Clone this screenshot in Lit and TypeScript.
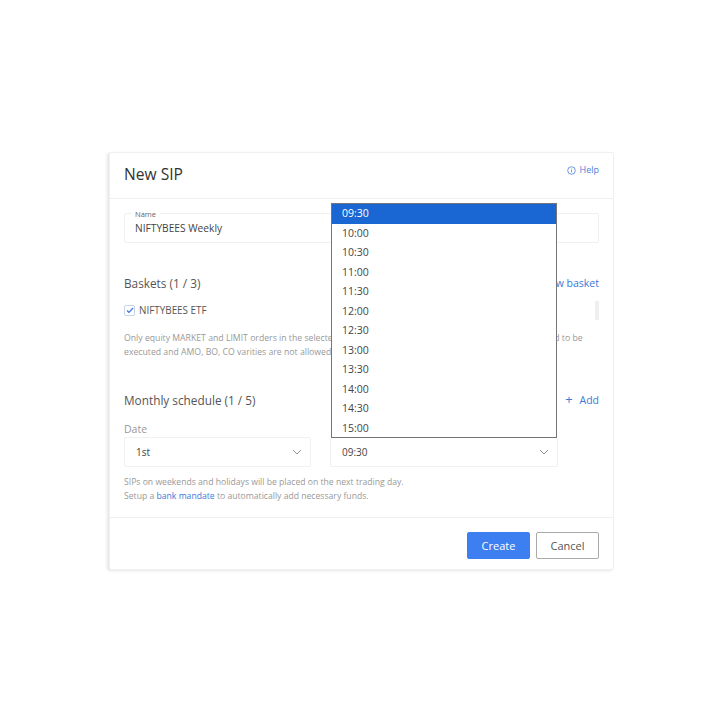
import { LitElement, html, css } from 'lit';
import { customElement } from 'lit/decorators.js';

const TIMES = ['09:30', '10:00', '10:30', '11:00', '11:30', '12:00', '12:30', '13:00', '13:30', '14:00', '14:30', '15:00'];

const chevron = html`<svg class="chevron" width="10" height="6" viewBox="0 0 10 6"><path d="M1 1l4 4 4-4" fill="none" stroke="#888" stroke-width="0.9"/></svg>`;

@customElement('app-root')
export class AppRoot extends LitElement {
  static styles = css`
    :host {
      display: block;
      height: 720px;
      background: #fff;
      font-family: 'Open Sans', 'Noto Sans', sans-serif;
      color: #444;
      box-sizing: border-box;
      padding: 152px 0 0 109px;
      overflow: hidden;
    }
    * { box-sizing: border-box; }
    .card {
      position: relative;
      width: 505px;
      height: 418px;
      background: #fff;
      border: 1px solid #f0f0f0;
      border-radius: 2px;
      box-shadow: -2px 1px 3px rgba(0, 0, 0, 0.1);
      display: flex;
      flex-direction: column;
    }
    .head {
      height: 46px;
      border-bottom: 1px solid #efefef;
      display: flex;
      justify-content: space-between;
      align-items: flex-start;
      padding: 9px 14px 0 14px;
      flex: none;
    }
    h1 {
      margin: 0;
      font-size: 15.6px;
      line-height: 24px;
      font-weight: 500;
      color: #333;
    }
    .help {
      font-size: 9px;
      line-height: 16px;
      color: #4a7fd4;
      display: flex;
      align-items: center;
      gap: 4px;
    }
    .body {
      flex: 1;
      padding: 14px 14px 0 14px;
    }
    .name {
      position: relative;
      height: 30px;
      border: 1px solid #efefef;
      border-radius: 2px;
      padding: 6px 10px 0;
      font-size: 10.2px;
      line-height: 16px;
      color: #444;
    }
    .name label {
      position: absolute;
      top: -5px;
      left: 6px;
      background: #fff;
      padding: 0 4px;
      font-size: 7.5px;
      line-height: 10px;
      color: #666;
    }
    .title-row {
      display: flex;
      justify-content: space-between;
      align-items: center;
      height: 20px;
    }
    .baskets { margin-top: 30px; }
    .schedule { margin-top: 31px; }
    h2 {
      margin: 0;
      font-size: 11.8px;
      font-weight: 400;
      color: #555;
      line-height: 20px;
    }
    .schedule .link { margin-bottom: 2px; }
    .link {
      color: #3b78d8;
      font-size: 10.5px;
      line-height: 16px;
    }
    .plus {
      font-size: 13px;
      line-height: 16px;
      margin-right: 4px;
    }
    .basket {
      display: flex;
      align-items: center;
      justify-content: space-between;
      margin-top: 7px;
      height: 20px;
    }
    .check {
      display: flex;
      align-items: center;
      gap: 4px;
      font-size: 9.9px;
      color: #555;
    }
    .box {
      width: 11px;
      height: 11px;
      border: 1px solid #c8d4e8;
      border-radius: 2px;
      display: flex;
      align-items: center;
      justify-content: center;
    }
    .scroll {
      width: 4px;
      height: 19px;
      background: #efefef;
    }
    .note {
      margin: 11px 0 0;
      font-size: 8.7px;
      line-height: 14px;
      color: #999;
      height: 28px;
      white-space: nowrap;
    }
    .fields {
      display: flex;
      gap: 19px;
      margin-top: 12px;
    }
    .field label {
      display: block;
      font-size: 10.5px;
      line-height: 14px;
      color: #999;
      height: 15px;
    }
    .select {
      height: 30px;
      border: 1px solid #f0f0f0;
      border-radius: 2px;
      display: flex;
      align-items: center;
      justify-content: space-between;
      padding: 0 8px 0 11px;
      font-size: 10px;
      color: #444;
    }
    .date { width: 187px; }
    .time { width: 228px; }
    .help-text {
      margin: 8px 0 0;
      font-size: 8.65px;
      line-height: 14px;
      color: #999;
    }
    .help-text a { color: #3b78d8; }
    .foot {
      height: 52px;
      flex: none;
      border-top: 1px solid #efefef;
      display: flex;
      justify-content: flex-end;
      align-items: flex-start;
      gap: 6px;
      padding: 14px 14px 0 0;
    }
    button {
      width: 63px;
      height: 27px;
      border-radius: 2px;
      font: 400 11px 'Open Sans', sans-serif;
      padding: 0;
    }
    .create {
      background: #3d7ff0;
      border: 1px solid #3d7ff0;
      color: #fff;
    }
    .cancel {
      background: #fff;
      border: 1px solid #aaa;
      color: #555;
    }
    .dropdown {
      position: absolute;
      left: 221px;
      top: 50px;
      width: 226px;
      height: 235px;
      background: #fff;
      border: 1px solid #767676;
      font-size: 10.5px;
      color: #444;
    }
    .dropdown div {
      height: 19.5px;
      line-height: 19.5px;
      padding-left: 10px;
    }
    .dropdown .on {
      background: #1a66d2;
      color: #fff;
    }
  `;

  render() {
    return html`
      <div class="card">
        <div class="head">
          <h1>New SIP</h1>
          <span class="help">
            <svg width="9" height="9" viewBox="0 0 9 9"><circle cx="4.5" cy="4.5" r="3.8" fill="none" stroke="#4a7fd4" stroke-width="0.8"/><path d="M4.5 4v2.4M4.5 2.6v.8" stroke="#4a7fd4" stroke-width="0.8"/></svg>
            Help
          </span>
        </div>
        <div class="body">
          <div class="name"><label>Name</label>NIFTYBEES Weekly</div>
          <div class="title-row baskets">
            <h2>Baskets (1 / 3)</h2>
            <span class="link">+ New basket</span>
          </div>
          <div class="basket">
            <span class="check">
              <span class="box"><svg width="8" height="7" viewBox="0 0 8 7"><path d="M1 3.5l2 2 4-4.5" fill="none" stroke="#3b78d8" stroke-width="1.2"/></svg></span>
              NIFTYBEES ETF
            </span>
            <span class="scroll"></span>
          </div>
          <p class="note">Only equity MARKET and LIMIT orders in the selected basket will be placed. Only CNC SIP orders are allowed to be<br>executed and AMO, BO, CO varities are not allowed.</p>
          <div class="title-row schedule">
            <h2>Monthly schedule (1 / 5)</h2>
            <span class="link"><span class="plus">+</span> Add</span>
          </div>
          <div class="fields">
            <div class="field date">
              <label>Date</label>
              <div class="select">1st ${chevron}</div>
            </div>
            <div class="field time">
              <label></label>
              <div class="select">09:30 ${chevron}</div>
            </div>
          </div>
          <p class="help-text">SIPs on weekends and holidays will be placed on the next trading day.<br>Setup a <a>bank mandate</a> to automatically add necessary funds.</p>
        </div>
        <div class="foot">
          <button class="create">Create</button>
          <button class="cancel">Cancel</button>
        </div>
        <div class="dropdown">
          ${TIMES.map((t, i) => html`<div class=${i === 0 ? 'on' : ''}>${t}</div>`)}
        </div>
      </div>
    `;
  }
}
